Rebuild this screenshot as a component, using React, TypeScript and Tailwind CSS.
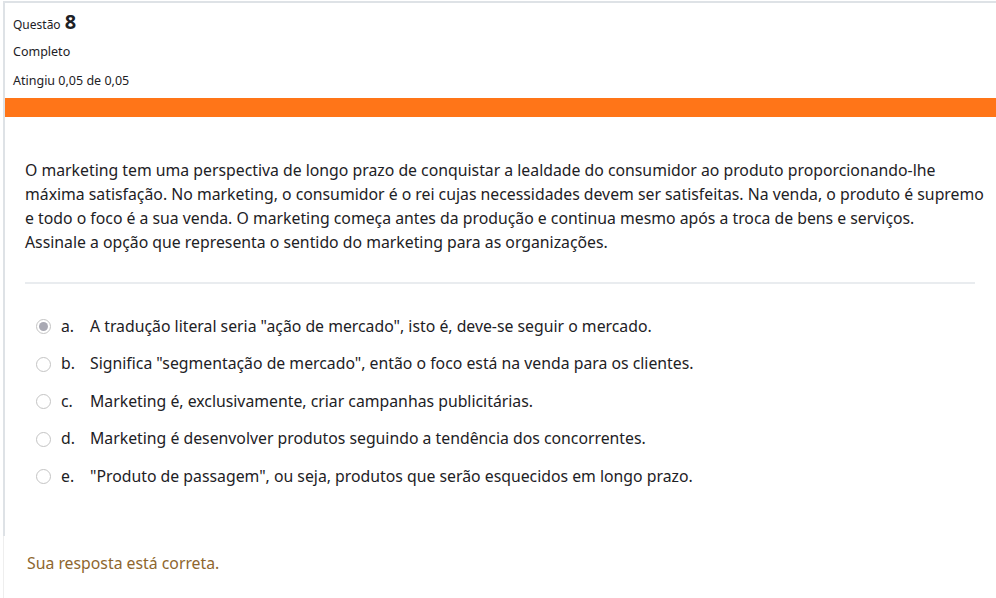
const options = [
  { letter: "a.", text: "A tradução literal seria \"ação de mercado\", isto é, deve-se seguir o mercado.", checked: true },
  { letter: "b.", text: "Significa \"segmentação de mercado\", então o foco está na venda para os clientes.", checked: false },
  { letter: "c.", text: "Marketing é, exclusivamente, criar campanhas publicitárias.", checked: false },
  { letter: "d.", text: "Marketing é desenvolver produtos seguindo a tendência dos concorrentes.", checked: false },
  { letter: "e.", text: "\"Produto de passagem\", ou seja, produtos que serão esquecidos em longo prazo.", checked: false },
];

function Radio({ checked }: { checked: boolean }) {
  return (
    <span className="flex h-[15px] w-[15px] items-center justify-center rounded-full border border-[#c4c4c4] bg-white">
      {checked && <span className="h-[9px] w-[9px] rounded-full bg-[#a9a9b3]" />}
    </span>
  );
}

export default function App() {
  return (
    <div className="flex h-[598px] w-[996px] flex-col overflow-hidden bg-white font-['Noto_Sans',sans-serif] text-[#1d2125]">
      <div className="ml-[3px] mt-[1px] border-l-2 border-t-2 border-[#dee2e6]">
        <div className="px-[8px] pb-[9px] pt-[8px]">
          <h3 className="flex items-baseline gap-[4px] text-[12px] leading-[22px]">
            Questão <span className="text-[20px] font-bold">8</span>
          </h3>
          <div className="mt-[8px] text-[12.5px] leading-[16px]">Completo</div>
          <div className="mt-[13px] text-[12.5px] leading-[16px]">Atingiu 0,05 de 0,05</div>
        </div>
        <div className="h-[19px] bg-[#ff7518]" />
        <div className="px-[20px] pb-[40px] pt-[41px]">
          <p className="whitespace-nowrap text-[15.8px] leading-[24px]">
            O marketing tem uma perspectiva de longo prazo de conquistar a lealdade do consumidor ao produto proporcionando-lhe
            <br />
            máxima satisfação. No marketing, o consumidor é o rei cujas necessidades devem ser satisfeitas. Na venda, o produto é supremo
            <br />
            e todo o foco é a sua venda. O marketing começa antes da produção e continua mesmo após a troca de bens e serviços.
            <br />
            Assinale a opção que representa o sentido do marketing para as organizações.
          </p>
          <hr className="mt-[28px] w-[950px] border-t-2 border-[#e9ecef]" />
          <div className="mt-[24px] flex flex-col">
            {options.map((o) => (
              <div key={o.letter} className="flex h-[37.5px] items-center text-[15.8px]">
                <span className="ml-[11px] mr-[10px]">
                  <Radio checked={o.checked} />
                </span>
                <span className="w-[29px]">{o.letter}</span>
                <span>{o.text}</span>
              </div>
            ))}
          </div>
        </div>
      </div>
      <div className="ml-[3px] flex-1 border-l border-[#eeeeee] px-[23px] pt-[15px]">
        <div className="text-[15.8px] leading-[24px] text-[#8e662e]">Sua resposta está correta.</div>
      </div>
    </div>
  );
}
